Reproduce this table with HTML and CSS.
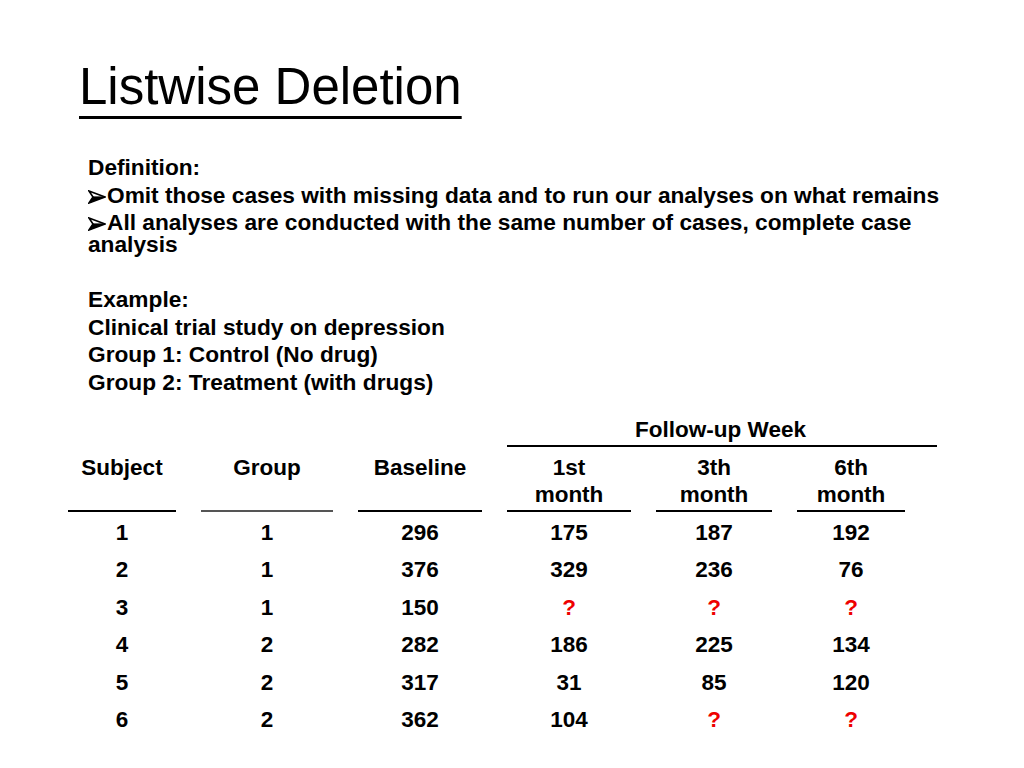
FILE: index.html
```html
<!DOCTYPE html>
<html>
<head>
<meta charset="utf-8">
<link rel="stylesheet" href="styles.css">
</head>
<body>
<div class="slide">
  <h1 class="title">Listwise Deletion</h1>
  <div class="body">
    <p>Definition:</p>
    <p class="bullet"><svg class="arrow" viewBox="0 0 18 14" width="18" height="14"><polygon points="1,1 17,7 1,13 5,7" fill="none" stroke="#000" stroke-width="1.6" stroke-linejoin="miter"/><line x1="5" y1="7" x2="17" y2="7" stroke="#000" stroke-width="1.2"/><polygon points="5,7 17,7 1,13" fill="#000"/></svg>Omit those cases with missing data and to run our analyses on what remains</p>
    <p class="bullet"><svg class="arrow" viewBox="0 0 18 14" width="18" height="14"><polygon points="1,1 17,7 1,13 5,7" fill="none" stroke="#000" stroke-width="1.6" stroke-linejoin="miter"/><line x1="5" y1="7" x2="17" y2="7" stroke="#000" stroke-width="1.2"/><polygon points="5,7 17,7 1,13" fill="#000"/></svg>All analyses are conducted with the same number of cases, complete case analysis</p>
    <p>&nbsp;</p>
    <p>Example:</p>
    <p>Clinical trial study on depression</p>
    <p>Group 1: Control (No drug)</p>
    <p>Group 2: Treatment (with drugs)</p>
  </div>
  <div class="table">
    <div class="follow">Follow-up Week</div>
    <div class="hd">Subject</div>
    <div class="hd grey">Group</div>
    <div class="hd">Baseline</div>
    <div class="hd">1st<br>month</div>
    <div class="hd">3th<br>month</div>
    <div class="hd">6th<br>month</div>

    <div class="c">1</div><div class="c">1</div><div class="c">296</div><div class="c">175</div><div class="c">187</div><div class="c">192</div>
    <div class="c">2</div><div class="c">1</div><div class="c">376</div><div class="c">329</div><div class="c">236</div><div class="c">76</div>
    <div class="c">3</div><div class="c">1</div><div class="c">150</div><div class="c q">?</div><div class="c q">?</div><div class="c q">?</div>
    <div class="c">4</div><div class="c">2</div><div class="c">282</div><div class="c">186</div><div class="c">225</div><div class="c">134</div>
    <div class="c">5</div><div class="c">2</div><div class="c">317</div><div class="c">31</div><div class="c">85</div><div class="c">120</div>
    <div class="c">6</div><div class="c">2</div><div class="c">362</div><div class="c">104</div><div class="c q">?</div><div class="c q">?</div>
  </div>
</div>
</body>
</html>
```

FILE: styles.css
```css
html, body {
  margin: 0;
  padding: 0;
  background: #fff;
}
.slide {
  width: 1024px;
  height: 768px;
  overflow: hidden;
  font-family: "Liberation Sans", Arial, sans-serif;
  color: #000;
}
.title {
  margin: 61px 0 0 79px;
  font-size: 51px;
  line-height: 52px;
  font-weight: normal;
  text-decoration: underline;
  text-decoration-thickness: 3px;
  text-underline-offset: 12px;
}
.body {
  margin: 43px 0 0 88px;
  width: 880px;
  font-size: 22.7px;
  font-weight: bold;
  line-height: 22px;
}
.body p {
  margin: 0 0 5.5px 0;
}
.arrow {
  vertical-align: -1px;
  margin-right: 1px;
}
.table {
  margin: 26px 0 0 68px;
  display: grid;
  grid-template-columns: 108px 132px 124px 124px 116px 108px;
  column-gap: 25px;
  font-size: 22.5px;
  font-weight: bold;
  text-align: center;
}
.follow {
  grid-column: 4 / 7;
  margin-right: -32px;
  line-height: 22px;
  padding-bottom: 4px;
  border-bottom: 2px solid #000;
  text-indent: -3px;
}
.hd {
  display: flex;
  flex-direction: column;
  justify-content: flex-start;
  line-height: 27px;
  padding-top: 7px;
  height: 56px;
  border-bottom: 2px solid #000;
}
.hd.grey {
  border-bottom-color: #555;
}
.c {
  line-height: 37.5px;
}
.c:nth-child(-n+13) {
  padding-top: 2px;
}
.q {
  color: #e00;
}
```
